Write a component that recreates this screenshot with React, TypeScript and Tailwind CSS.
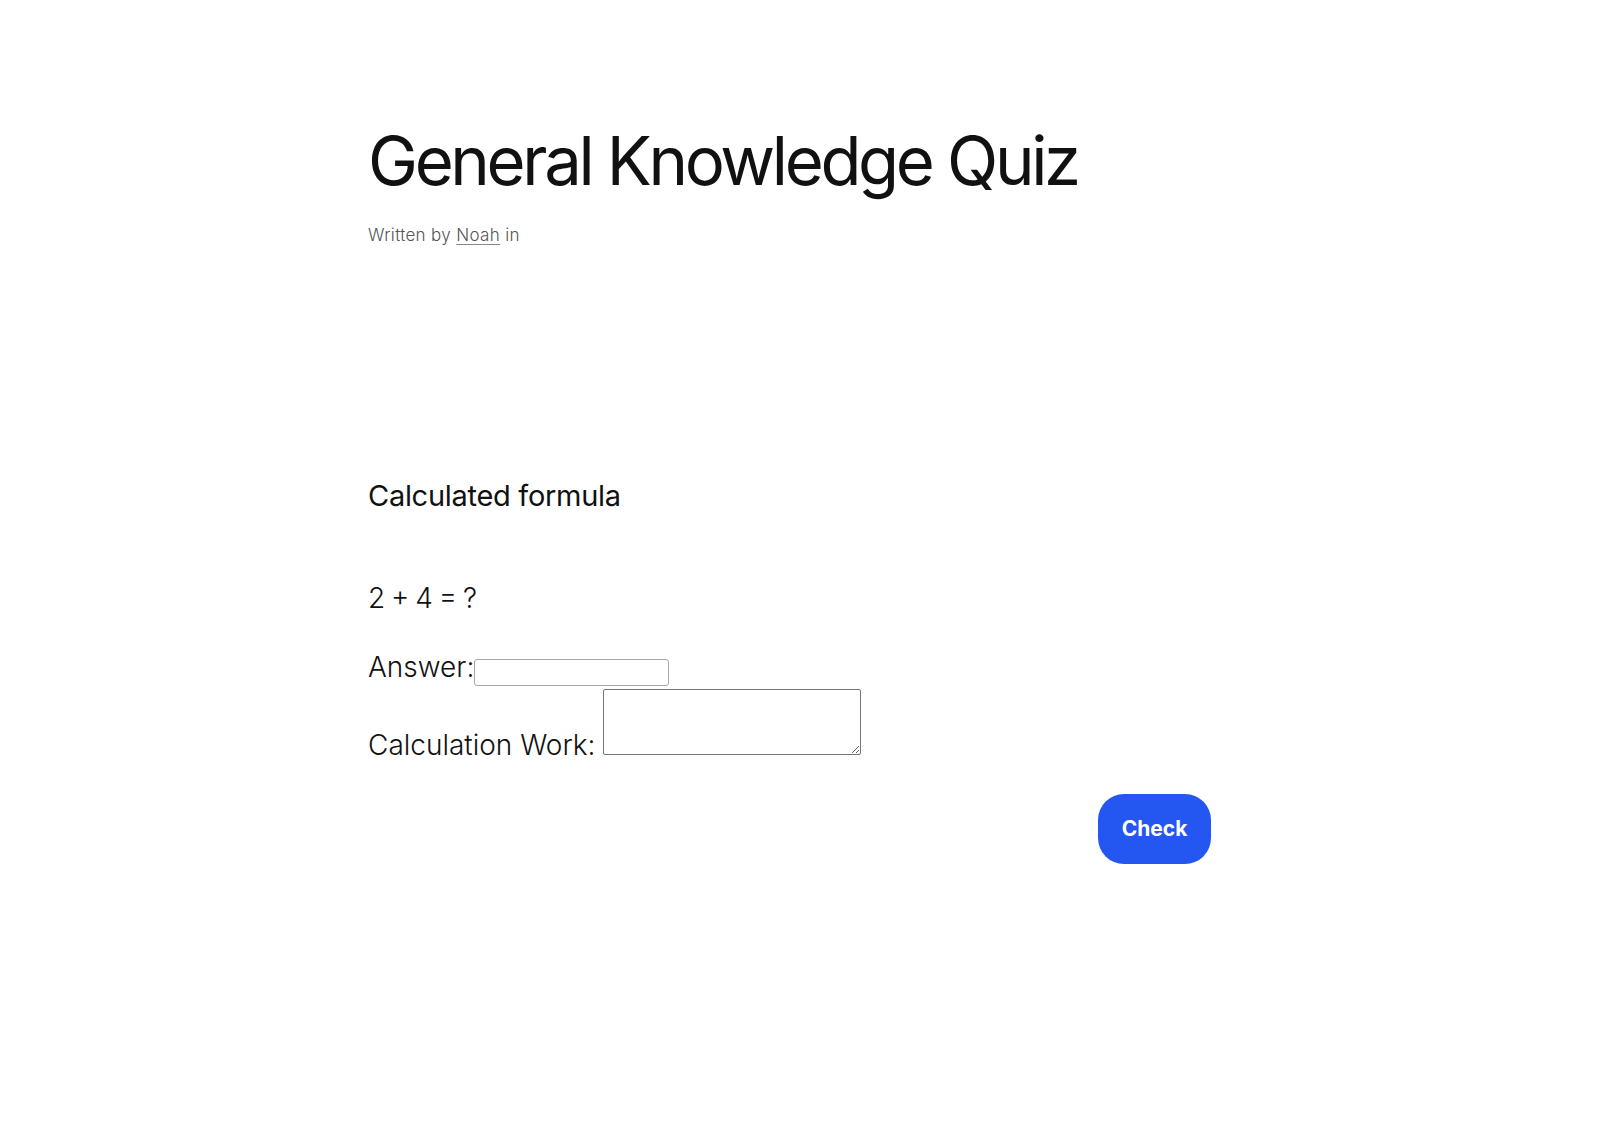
import * as React from "react";

export default function App() {
  const [answer, setAnswer] = React.useState("");
  const [work, setWork] = React.useState("");

  return (
    <div className="min-h-screen bg-white font-['Inter',sans-serif] text-[#111]">
      <main className="mx-auto w-[864px] pt-[127px]">
        <h1 className="text-[67px] font-normal leading-[68px] tracking-[-0.05em]">
          General Knowledge Quiz
        </h1>
        <p className="mt-[28px] text-[17px] font-light leading-[24px] tracking-[0.02em] text-[#555]">
          Written by{" "}
          <a href="#" className="underline underline-offset-[3px] decoration-[#888]">
            Noah
          </a>{" "}
          in
        </p>

        <section className="mt-[231px]">
          <h2 className="text-[29px] font-normal leading-[36px] tracking-[-0.01em]">
            Calculated formula
          </h2>
          <p className="mt-[66px] text-[28px] font-light leading-[36px] [word-spacing:-2px]">
            2 + 4 = ?
          </p>

          <form className="mt-[33px] pr-[21px]" onSubmit={(e) => e.preventDefault()}>
            <div className="text-[28px] font-light leading-[36px]">
              <label htmlFor="answer">Answer:</label>
              <input
                id="answer"
                value={answer}
                onChange={(e) => setAnswer(e.target.value)}
                className="h-[27px] w-[195px] rounded-[3px] border border-[#a8a8a8] px-1 text-[13px] leading-none align-baseline"
              />
            </div>
            <div className="mt-[3px] text-[28px] font-light leading-[36px]">
              <label htmlFor="work">Calculation Work:</label>{" "}
              <textarea
                id="work"
                value={work}
                onChange={(e) => setWork(e.target.value)}
                className="h-[66px] w-[258px] rounded-[2px] border border-[#767676] px-1 text-[13px] leading-normal"
              />
            </div>
            <div className="mt-[31px] flex justify-end">
              <button
                type="submit"
                className="h-[70px] w-[113px] rounded-[26px] bg-[#2457f1] text-[21px] font-bold text-white"
              >
                Check
              </button>
            </div>
          </form>
        </section>
      </main>
    </div>
  );
}
